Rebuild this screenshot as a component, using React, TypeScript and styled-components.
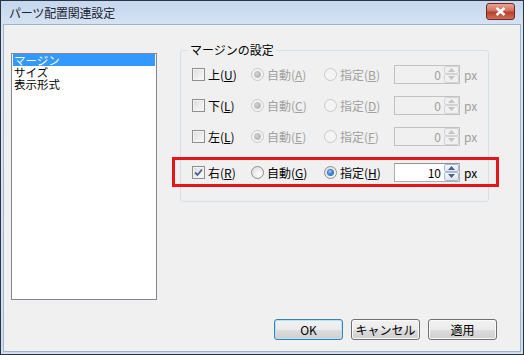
import React from 'react';
import styled, { createGlobalStyle } from 'styled-components';

const GlobalStyle = createGlobalStyle`
html, body {
  margin: 0;
  padding: 0;
  background: #ffffff;
}
body {
  font-family: "Noto Sans CJK JP", "Noto Sans", sans-serif;
  font-size: 12px;
  color: #000;
}
`;

const Window = styled.div`
  width: 524px;
  height: 355px;
  box-sizing: border-box;
  border: 1px solid #2b3440;
  background: linear-gradient(#c5d7ee, #d9e6f4 30px, #cfdff1);
  display: flex;
  flex-direction: column;
  padding: 0 2px 2px 2px;
`;

const TitleBar = styled.div`
  height: 23px;
  display: flex;
  align-items: center;
  justify-content: space-between;
  padding: 0 6px 0 6px;
  flex-shrink: 0;
`;

const Title = styled.span`
  font-size: 12px;
  color: #1b2430;
  letter-spacing: -0.2px;
`;

const CloseButton = styled.div`
  width: 27px;
  height: 15px;
  margin-top: -2px;
  border: 1px solid #6d2a22;
  border-radius: 3px;
  background: linear-gradient(#e8a494, #d0705d 45%, #b8402e 55%, #cf6e5a);
  display: flex;
  align-items: center;
  justify-content: center;
`;

const Client = styled.div`
  flex: 1;
  background: #f0f0f0;
  border: 1px solid #9fb3cb;
  display: flex;
  flex-direction: column;
`;

const Body = styled.div`
  flex: 1;
  display: flex;
  align-items: flex-start;
  padding: 18px 0 0 7px;
`;

const ListBox = styled.div`
  width: 146px;
  height: 247px;
  margin-top: 10px;
  box-sizing: border-box;
  border: 1px solid #828790;
  background: #ffffff;
  padding: 0 1px;
`;

const ListItem = styled.div<{ $selected?: boolean }>`
  height: 12px;
  line-height: 12px;
  font-size: 11.5px;
  padding-left: 1px;
  white-space: nowrap;
  background: ${(p) => (p.$selected ? '#3399ff' : 'transparent')};
  color: ${(p) => (p.$selected ? '#ffffff' : '#000000')};
`;

const Group = styled.fieldset`
  margin: 0 0 0 23px;
  width: 308px;
  box-sizing: border-box;
  border: 1px solid #d5dfe5;
  border-radius: 3px;
  padding: 0 11px 14px 11px;
`;

const Legend = styled.legend`
  font-size: 12px;
  line-height: 14px;
  padding: 0 2px;
  margin-left: -4px;
  color: #000;
`;

const Row = styled.div<{ $highlight?: boolean }>`
  display: flex;
  align-items: center;
  height: 20px;
  margin-top: 11px;
  &:first-of-type {
    margin-top: 7px;
  }
  ${(p) =>
    p.$highlight &&
    `
    height: 20px;
    border: 3px solid #e8141c;
    padding: 2px 19px 2px 17px;
    margin-left: -20px;
    margin-right: -22px;
  `}
`;

const Cell = styled.div<{ $w: number }>`
  width: ${(p) => p.$w}px;
  display: flex;
  align-items: center;
  flex-shrink: 0;
`;

const Label = styled.span<{ $disabled?: boolean }>`
  margin-left: 3px;
  font-size: 12px;
  white-space: nowrap;
  color: ${(p) => (p.$disabled ? '#a0a0a0' : '#000')};
  u {
    text-underline-offset: 1px;
  }
`;

const CheckBox = styled.div`
  width: 13px;
  height: 13px;
  box-sizing: border-box;
  border: 1px solid #8e8f8f;
  background: linear-gradient(135deg, #dcdcdc, #fbfbfb);
  box-shadow: inset 0 0 0 1px #f4f4f4;
  display: flex;
  align-items: center;
  justify-content: center;
  flex-shrink: 0;
`;

const Radio = styled.div<{ $disabled?: boolean }>`
  width: 13px;
  height: 13px;
  box-sizing: border-box;
  border-radius: 50%;
  border: 1px solid ${(p) => (p.$disabled ? '#c9c9c9' : '#8e8f8f')};
  background: ${(p) =>
    p.$disabled ? '#f4f4f4' : 'radial-gradient(circle at 65% 65%, #ffffff, #d6d6d6)'};
  display: flex;
  align-items: center;
  justify-content: center;
  flex-shrink: 0;
`;

const Dot = styled.div<{ $disabled?: boolean }>`
  width: 5px;
  height: 5px;
  border-radius: 50%;
  background: ${(p) =>
    p.$disabled
      ? 'radial-gradient(circle at 40% 40%, #d8d8d8, #9c9c9c)'
      : 'radial-gradient(circle at 40% 35%, #9fd0ff, #1b5fc0 70%, #0b3d8c)'};
  box-shadow: ${(p) => (p.$disabled ? '0 0 0 1px #c0c0c0' : '0 0 0 1px #3e78c6')};
`;

const Spin = styled.div<{ $disabled?: boolean }>`
  width: 66px;
  height: 19px;
  box-sizing: border-box;
  border: 1px solid ${(p) => (p.$disabled ? '#c2c2c2' : '#abadb3')};
  border-top-color: ${(p) => (p.$disabled ? '#c2c2c2' : '#8f9296')};
  background: ${(p) => (p.$disabled ? '#f0f0f0' : '#ffffff')};
  display: flex;
  flex-shrink: 0;
`;

const SpinValue = styled.div<{ $disabled?: boolean }>`
  flex: 1;
  text-align: right;
  padding-right: 3px;
  font-size: 12px;
  line-height: 17px;
  color: ${(p) => (p.$disabled ? '#a0a0a0' : '#000')};
`;

const SpinArrows = styled.div`
  width: 15px;
  display: flex;
  flex-direction: column;
`;

const Arrow = styled.div<{ $disabled?: boolean }>`
  flex: 1;
  display: flex;
  align-items: center;
  justify-content: center;
  border: 1px solid ${(p) => (p.$disabled ? '#d4d4d4' : '#a9b9cf')};
  border-radius: 2px;
  background: ${(p) =>
    p.$disabled ? '#f0f0f0' : 'linear-gradient(#f4f8fc, #dde8f3)'};
`;

const Unit = styled.span<{ $disabled?: boolean }>`
  margin-left: 4px;
  font-size: 12px;
  color: ${(p) => (p.$disabled ? '#a0a0a0' : '#000')};
`;

const Footer = styled.div`
  display: flex;
  justify-content: flex-end;
  gap: 8px;
  padding: 0 23px 11px 0;
`;

const Button = styled.div<{ $default?: boolean }>`
  width: 69px;
  height: 21px;
  box-sizing: border-box;
  border: 1px solid ${(p) => (p.$default ? '#3c7fb1' : '#707070')};
  border-radius: 3px;
  background: linear-gradient(#f2f2f2, #ebebeb 50%, #dddddd 51%, #cfcfcf);
  box-shadow: inset 0 0 0 1px ${(p) => (p.$default ? '#b9e2f7' : '#fbfbfb')};
  display: flex;
  align-items: center;
  justify-content: center;
  font-size: 12px;
  color: #000;
`;

const Check = () => (
  <svg width="9" height="9" viewBox="0 0 9 9">
    <path d="M1 4.5 L3.5 7 L8 1.5" fill="none" stroke="#4a5f97" strokeWidth="1.8" />
  </svg>
);

const Tri = ({ up, disabled }: { up?: boolean; disabled?: boolean }) => (
  <svg width="7" height="4" viewBox="0 0 7 4">
    <path
      d={up ? 'M0 4 L3.5 0 L7 4 Z' : 'M0 0 L3.5 4 L7 0 Z'}
      fill={disabled ? '#c4c4c4' : '#4d6185'}
    />
  </svg>
);

type RowData = {
  side: string;
  key: string;
  auto: string;
  spec: string;
  enabled: boolean;
  value: string;
};

const rows: RowData[] = [
  { side: '上', key: 'U', auto: 'A', spec: 'B', enabled: false, value: '0' },
  { side: '下', key: 'L', auto: 'C', spec: 'D', enabled: false, value: '0' },
  { side: '左', key: 'L', auto: 'E', spec: 'F', enabled: false, value: '0' },
  { side: '右', key: 'R', auto: 'G', spec: 'H', enabled: true, value: '10' },
];

const MarginRow = ({ r }: { r: RowData }) => {
  const off = !r.enabled;
  return (
    <Row $highlight={r.enabled}>
      <Cell $w={59}>
        <CheckBox>{r.enabled && <Check />}</CheckBox>
        <Label>
          {r.side}(<u>{r.key}</u>)
        </Label>
      </Cell>
      <Cell $w={73}>
        <Radio $disabled={off}>{off && <Dot $disabled />}</Radio>
        <Label $disabled={off}>
          自動(<u>{r.auto}</u>)
        </Label>
      </Cell>
      <Cell $w={70}>
        <Radio $disabled={off}>{!off && <Dot />}</Radio>
        <Label $disabled={off}>
          指定(<u>{r.spec}</u>)
        </Label>
      </Cell>
      <Spin $disabled={off}>
        <SpinValue $disabled={off}>{r.value}</SpinValue>
        <SpinArrows>
          <Arrow $disabled={off}>
            <Tri up disabled={off} />
          </Arrow>
          <Arrow $disabled={off}>
            <Tri disabled={off} />
          </Arrow>
        </SpinArrows>
      </Spin>
      <Unit $disabled={off}>px</Unit>
    </Row>
  );
};

export default function App() {
  return (
    <>
      <GlobalStyle />
      <Window>
        <TitleBar>
          <Title>パーツ配置関連設定</Title>
          <CloseButton>
            <svg width="11" height="9" viewBox="0 0 11 9">
              <path d="M1.5 1 L9.5 8 M9.5 1 L1.5 8" stroke="#ffffff" strokeWidth="2.4" />
            </svg>
          </CloseButton>
        </TitleBar>
        <Client>
          <Body>
            <ListBox>
              <ListItem $selected>マージン</ListItem>
              <ListItem>サイズ</ListItem>
              <ListItem>表示形式</ListItem>
            </ListBox>
            <Group>
              <Legend>マージンの設定</Legend>
              {rows.map((r) => (
                <MarginRow key={r.side} r={r} />
              ))}
            </Group>
          </Body>
          <Footer>
            <Button $default>OK</Button>
            <Button>キャンセル</Button>
            <Button>適用</Button>
          </Footer>
        </Client>
      </Window>
    </>
  );
}
